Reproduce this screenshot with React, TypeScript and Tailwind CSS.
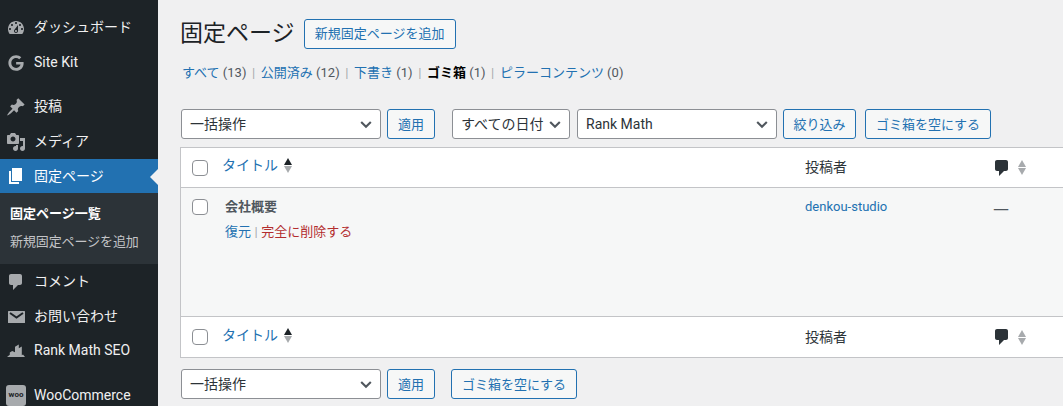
import type { ReactNode } from "react";
import { FaGoogle } from "react-icons/fa";

const Dash = ({ d, className }: { d: string; className?: string }) => (
    <svg viewBox="0 0 20 20" className={className ?? "w-5 h-5"} fill="currentColor">
        <path d={d} />
    </svg>
);

const icons = {
    dashboard: "M3.76 16h12.48c1.1-1.37 1.76-3.11 1.76-5 0-4.42-3.58-8-8-8s-8 3.58-8 8c0 1.89.66 3.63 1.76 5zM10 4c.55 0 1 .45 1 1s-.45 1-1 1-1-.45-1-1 .45-1 1-1zM6 6c.55 0 1 .45 1 1s-.45 1-1 1-1-.45-1-1 .45-1 1-1zm8 0c.55 0 1 .45 1 1s-.45 1-1 1-1-.45-1-1 .45-1 1-1zm-5.37 5.55L12 7v6c0 1.1-.9 2-2 2s-2-.9-2-2c0-.57.24-1.08.63-1.45zM4 10c.55 0 1 .45 1 1s-.45 1-1 1-1-.45-1-1 .45-1 1-1zm12 0c.55 0 1 .45 1 1s-.45 1-1 1-1-.45-1-1 .45-1 1-1zm-5 3c0-.55-.45-1-1-1s-1 .45-1 1 .45 1 1 1 1-.45 1-1z",
    pin: "M10.44 3.02l1.82-1.82 6.36 6.35-1.83 1.82c-1.05-.68-2.48-.57-3.41.36l-.75.75c-.92.93-1.04 2.35-.35 3.41l-1.83 1.82-2.41-2.41-2.8 2.79c-.42.42-3.38 2.71-3.8 2.29s1.86-3.39 2.28-3.81l2.79-2.79L4.1 9.36l1.83-1.82c1.05.69 2.48.57 3.4-.36l.75-.75c.93-.92 1.05-2.35.36-3.41z",
    media: "M13 11V4c0-.55-.45-1-1-1h-1.67L9 1H5L3.67 3H2c-.55 0-1 .45-1 1v7c0 .55.45 1 1 1h10c.55 0 1-.45 1-1zM7 4.5c1.38 0 2.5 1.12 2.5 2.5S8.38 9.5 7 9.5 4.5 8.38 4.5 7 5.62 4.5 7 4.5zM14 6h5v10.5c0 1.38-1.12 2.5-2.5 2.5S14 17.88 14 16.5s1.12-2.5 2.5-2.5c.17 0 .34.02.5.05V9h-3V6zm-4 8.05V13h2v3.5c0 1.38-1.12 2.5-2.5 2.5S7 17.88 7 16.5 8.12 14 9.5 14c.17 0 .34.02.5.05z",
    page: "M6 15V2h10v13H6zm-1 1h8v2H3V5h2v11z",
    comment: "M5 2h9c1.1 0 2 .9 2 2v7c0 1.1-.9 2-2 2h-2l-5 5v-5H5c-1.1 0-2-.9-2-2V4c0-1.1.9-2 2-2z",
    rank: "M1 16h18l-2-2.500-1.200.800V5.500l-3 1.800V3.500l-3.800 2.300v5.500L6.200 10 3.800 11.500v2.300L1 16z",
};

const MailIcon = () => (
    <svg viewBox="0 0 20 20" className="w-5 h-5">
        <rect x="2" y="4" width="17" height="12" rx="0.5" fill="currentColor" />
        <path d="M4 6l6.500 4.500L17 6" fill="none" stroke="#1d2327" strokeWidth="2" />
    </svg>
);

const MenuItem = ({ icon, label, active, className }: { icon: ReactNode; label: string; active?: boolean; className?: string }) => (
    <div className={`relative flex items-center h-[35px] ${active ? "bg-[#2271b1] text-white" : "text-[#f0f0f1]"} ${className ?? ""}`}>
        <div className={`w-[34px] pl-[6px] flex justify-start ${active ? "text-white" : "text-[#a7aaad]"}`}>{icon}</div>
        <span className={`text-[14px] leading-none ${active ? "" : "-mt-[2px]"}`}>{label}</span>
        {active && (
            <span className="absolute right-0 top-[10px] border-y-[8px] border-r-[8px] border-y-transparent border-r-[#f0f0f1]" />
        )}
    </div>
);

const Sidebar = () => (
    <div className="w-[158px] shrink-0 bg-[#1d2327] pt-[10px] h-full">
        <MenuItem icon={<Dash d={icons.dashboard} />} label="ダッシュボード" />
        <MenuItem icon={<FaGoogle className="w-4 h-4 ml-[2px]" />} label="Site Kit" className="mb-[9px]" />
        <MenuItem icon={<Dash d={icons.pin} />} label="投稿" />
        <MenuItem icon={<Dash d={icons.media} />} label="メディア" />
        <MenuItem icon={<Dash d={icons.page} />} label="固定ページ" active className="!h-[34px]" />
        <div className="bg-[#2c3338] h-[71px] pl-[10px] pt-[14px] text-[13px] leading-none">
            <div className="font-bold text-white">固定ページ一覧</div>
            <div className="mt-[15px] text-[#c3c4c7] tracking-[-0.1px] whitespace-nowrap">新規固定ページを追加</div>
        </div>
        <MenuItem icon={<Dash d={icons.comment} />} label="コメント" />
        <MenuItem icon={<MailIcon />} label="お問い合わせ" />
        <MenuItem icon={<Dash d={icons.rank} />} label="Rank Math SEO" className="!h-[34px] mb-[10px]" />
        <MenuItem
            icon={
                <div className="w-5 h-[21px] rounded-[3px] bg-[#a7aaad] text-[#1d2327] text-[8px] font-bold leading-[20px] text-center">
                    woo
                </div>
            }
            label="WooCommerce"
        />
    </div>
);

const Button = ({ children, className }: { children: ReactNode; className?: string }) => (
    <button className={`h-[30px] px-[10px] shrink-0 rounded-[3px] border border-[#2271b1] bg-[#f6f7f7] text-[#2271b1] text-[13px] leading-none whitespace-nowrap ${className ?? ""}`}>
        {children}
    </button>
);

const Select = ({ label, className }: { label: string; className: string }) => (
    <div className={`h-[30px] shrink-0 flex items-center justify-between pl-[8px] pr-[6px] rounded-[3px] border border-[#8c8f94] bg-white text-[#2c3338] text-[14px] whitespace-nowrap ${className}`}>
        <span>{label}</span>
        <svg viewBox="0 0 20 20" className="w-4 h-4 text-[#50575e]" fill="none" stroke="currentColor" strokeWidth="2.6">
            <path d="M4 7.5l6 6 6-6" />
        </svg>
    </div>
);

const Checkbox = () => <div className="w-4 h-4 rounded-[4px] border border-[#8c8f94] bg-white" />;

const SortArrows = ({ dark }: { dark?: boolean }) => (
    <span className="inline-flex flex-col gap-[1px] ml-[6px]">
        <span className={`border-x-[4px] border-b-[7px] border-x-transparent ${dark ? "border-b-[#1d2327]" : "border-b-[#a7aaad]"}`} />
        <span className="border-x-[4px] border-t-[7px] border-x-transparent border-t-[#a7aaad]" />
    </span>
);

const HeadRow = ({ className }: { className: string }) => (
    <div className={`flex items-center bg-white border-[#c3c4c7] ${className}`}>
        <div className="w-[41px] pl-[11px]">
            <Checkbox />
        </div>
        <div className="w-[583px] flex items-center text-[#2271b1] text-[14px] -mt-[4px]">
            <span>タイトル</span>
            <SortArrows dark />
        </div>
        <div className="w-[190px] text-[14px] text-[#2c3338]">投稿者</div>
        <div className="flex items-center text-[#2c3338]">
            <Dash d={icons.comment} className="w-5 h-5 -ml-[3px]" />
            <SortArrows />
        </div>
    </div>
);

const Filter = ({ label, count, current }: { label: string; count: number; current?: boolean }) => (
    <span>
        <span className={current ? "font-bold text-black" : "text-[#2271b1]"}>{label}</span>
        <span className="text-[#50575e]"> ({count})</span>
    </span>
);

const Sep = () => <span className="mx-[5.6px] text-[#a7aaad]">|</span>;

export default function App() {
    return (
        <div className="flex w-[1063px] h-[406px] overflow-hidden bg-[#f0f0f1] font-['Roboto','Noto_Sans_CJK_JP',sans-serif]">
            <Sidebar />
            <div className="flex-1 min-w-0 pl-[23px]">
                <div className="flex items-center pt-[19px] h-[48px]">
                    <h1 className="text-[23px] leading-none text-[#1d2327] whitespace-nowrap -ml-[1px]">固定ページ</h1>
                    <Button className="ml-[9px] w-[152px] !px-0">新規固定ページを追加</Button>
                </div>
                <div className="mt-[15px] pl-[1px] h-[20px] flex items-center text-[13px] whitespace-nowrap">
                    <Filter label="すべて" count={13} />
                    <Sep />
                    <Filter label="公開済み" count={12} />
                    <Sep />
                    <Filter label="下書き" count={1} />
                    <Sep />
                    <Filter label="ゴミ箱" count={1} current />
                    <Sep />
                    <Filter label="ピラーコンテンツ" count={0} />
                </div>
                <div className="mt-[26px] flex items-center">
                    <Select label="一括操作" className="w-[200px]" />
                    <Button className="ml-[6px] w-[48px] !px-0">適用</Button>
                    <Select label="すべての日付" className="ml-[17px] w-[118px]" />
                    <Select label="Rank Math" className="ml-[7px] w-[200px]" />
                    <Button className="ml-[6px] w-[73px] !px-0">絞り込み</Button>
                    <Button className="ml-[9px] w-[126px] !px-0">ゴミ箱を空にする</Button>
                </div>
                <div className="mt-[8px] w-[1000px] -ml-[1px]">
                    <HeadRow className="border-x border-t border-b h-[41px]" />
                    <div className="flex h-[128px] bg-[#f6f7f7] border-x border-[#c3c4c7] pt-[11px]">
                        <div className="w-[44px] pl-[11px]">
                            <Checkbox />
                        </div>
                        <div className="w-[580px] -mt-[1px]">
                            <div className="text-[13px] font-bold text-[#50575e] leading-[18px]">会社概要</div>
                            <div className="text-[13px] leading-[18px] mt-[7px]">
                                <span className="text-[#2271b1]">復元</span>
                                <span className="text-[#a7aaad] mx-[3.5px]">|</span>
                                <span className="text-[#b32d2e]">完全に削除する</span>
                            </div>
                        </div>
                        <div className="w-[190px] text-[13px] text-[#2271b1] leading-[18px] -mt-[1px]">denkou-studio</div>
                        <div className="text-[18px] text-[#50575e] leading-[18px] -mt-[1px] -ml-[2px] font-['Noto_Sans_CJK_JP']">—</div>
                    </div>
                    <HeadRow className="border h-[42px]" />
                </div>
                <div className="mt-[11px] flex items-center">
                    <Select label="一括操作" className="w-[200px]" />
                    <Button className="ml-[6px] w-[48px] !px-0">適用</Button>
                    <Button className="ml-[16px] w-[126px] !px-0">ゴミ箱を空にする</Button>
                </div>
            </div>
        </div>
    );
}
